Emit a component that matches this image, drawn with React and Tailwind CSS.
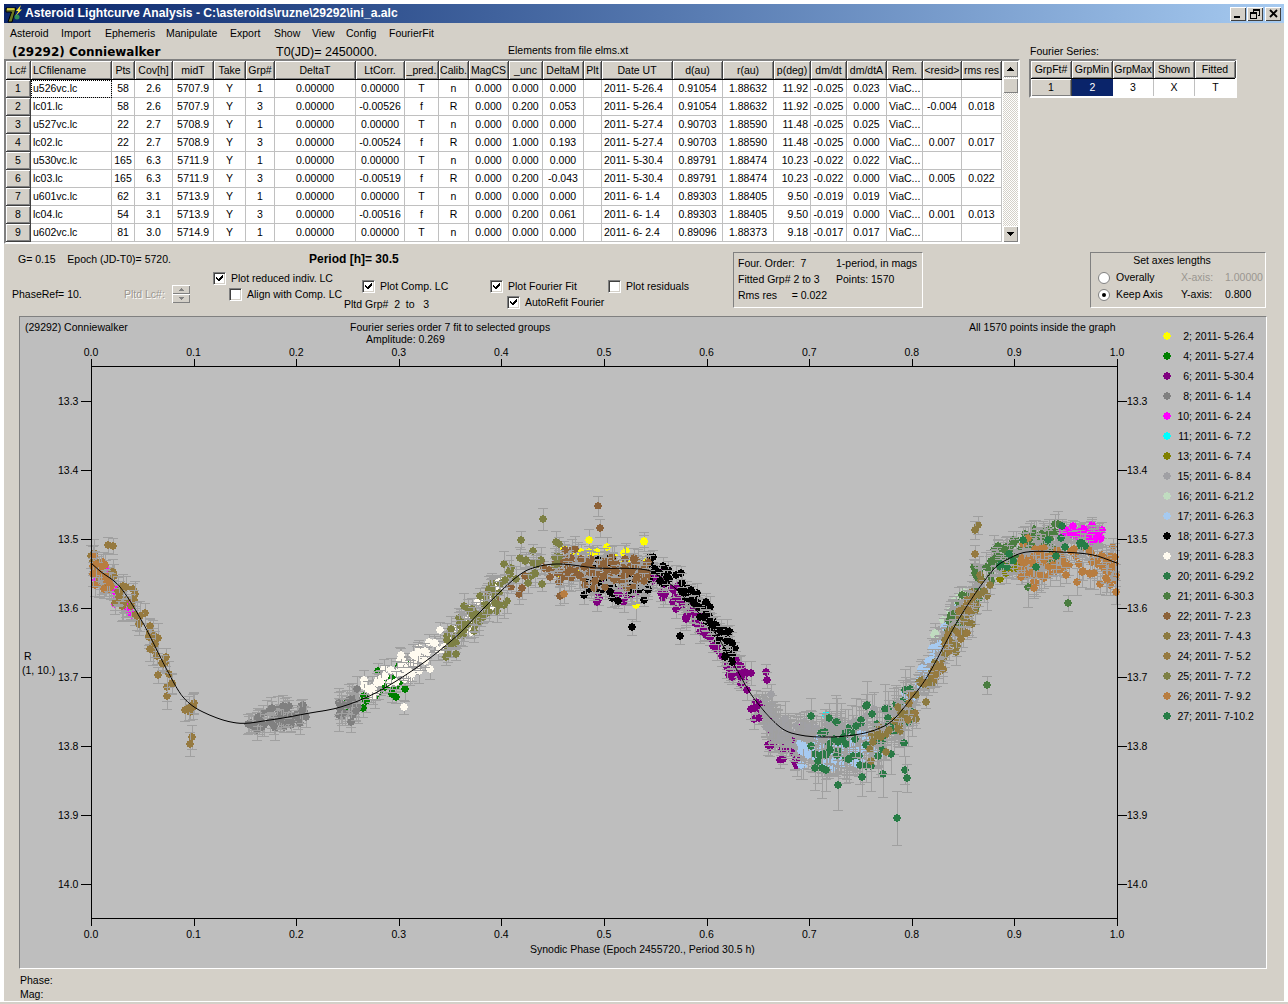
import React from "react";

const COLS = "grid grid-cols-[25px_81px_23px_38px_41px_32px_29px_81px_49px_34px_30px_40px_34px_41px_18px_71px_50px_51px_37px_36px_40px_36px_39px_40px]";
const HEAD = ["Lc#","LCfilename","Pts","Cov[h]","midT","Take","Grp#","DeltaT","LtCorr.","_pred.","Calib.","MagCS","_unc","DeltaM","Plt","Date UT","d(au)","r(au)","p(deg)","dm/dt","dm/dtA","Rem.","<resid>","rms res"];
const ROWS = [
  ["1","u526vc.lc","58","2.6","5707.9","Y","1","0.00000","0.00000","T","n","0.000","0.000","0.000","","2011- 5-26.4","0.91054","1.88632","11.92","-0.025","0.023","ViaC...","",""],
  ["2","lc01.lc","58","2.6","5707.9","Y","3","0.00000","-0.00526","f","R","0.000","0.200","0.053","","2011- 5-26.4","0.91054","1.88632","11.92","-0.025","0.000","ViaC...","-0.004","0.018"],
  ["3","u527vc.lc","22","2.7","5708.9","Y","1","0.00000","0.00000","T","n","0.000","0.000","0.000","","2011- 5-27.4","0.90703","1.88590","11.48","-0.025","0.025","ViaC...","",""],
  ["4","lc02.lc","22","2.7","5708.9","Y","3","0.00000","-0.00524","f","R","0.000","1.000","0.193","","2011- 5-27.4","0.90703","1.88590","11.48","-0.025","0.000","ViaC...","0.007","0.017"],
  ["5","u530vc.lc","165","6.3","5711.9","Y","1","0.00000","0.00000","T","n","0.000","0.000","0.000","","2011- 5-30.4","0.89791","1.88474","10.23","-0.022","0.022","ViaC...","",""],
  ["6","lc03.lc","165","6.3","5711.9","Y","3","0.00000","-0.00519","f","R","0.000","0.200","-0.043","","2011- 5-30.4","0.89791","1.88474","10.23","-0.022","0.000","ViaC...","0.005","0.022"],
  ["7","u601vc.lc","62","3.1","5713.9","Y","1","0.00000","0.00000","T","n","0.000","0.000","0.000","","2011- 6- 1.4","0.89303","1.88405","9.50","-0.019","0.019","ViaC...","",""],
  ["8","lc04.lc","54","3.1","5713.9","Y","3","0.00000","-0.00516","f","R","0.000","0.200","0.061","","2011- 6- 1.4","0.89303","1.88405","9.50","-0.019","0.000","ViaC...","0.001","0.013"],
  ["9","u602vc.lc","81","3.0","5714.9","Y","1","0.00000","0.00000","T","n","0.000","0.000","0.000","","2011- 6- 2.4","0.89096","1.88373","9.18","-0.017","0.017","ViaC...","",""],
];
const raised = "bg-[#d4d0c8] shadow-[inset_1px_1px_0_#ffffff,inset_-1px_-1px_0_#808080]";
const LEGEND = [
  ["2","2011- 5-26.4","#ffff00"],["4","2011- 5-27.4","#008000"],["6","2011- 5-30.4","#800080"],["8","2011- 6- 1.4","#808080"],
  ["10","2011- 6- 2.4","#ff00ff"],["11","2011- 6- 7.2","#00ffff"],["13","2011- 6- 7.4","#808000"],["15","2011- 6- 8.4","#a0a0a4"],
  ["16","2011- 6-21.2","#c0dcc0"],["17","2011- 6-26.3","#a6caf0"],["18","2011- 6-27.3","#000000"],["19","2011- 6-28.3","#fffbf0"],
  ["20","2011- 6-29.2","#2a7a46"],["21","2011- 6-30.3","#4a7d40"],["22","2011- 7- 2.3","#8c6239"],["23","2011- 7- 4.3","#8c7a40"],
  ["24","2011- 7- 5.2","#967a40"],["25","2011- 7- 7.2","#7d8044"],["26","2011- 7- 9.2","#b87d40"],["27","2011- 7-10.2","#267d46"],
];
const COLOR = Object.fromEntries(LEGEND.map((l) => [l[0], l[2]]));

const KNOTS = [[91,563],[100,571],[120,587],[143,623],[167,670],[183,697],[203,712],[237,723],[270,720],[310,713],[337,708],[365,698],[393,683],[430,658],[460,633],[480,612],[513,580],[530,569],[557,564],[597,568],[647,570],[665,580],[680,593],[713,630],[733,663],[753,697],[780,727],[800,735],[830,737],[860,734],[880,728],[893,720],[910,700],[927,677],[960,617],[993,570],[1010,558],[1027,552],[1060,552],[1093,555],[1117,563]];
function curve(x) {
  let i = 0;
  while (i < KNOTS.length - 2 && KNOTS[i + 1][0] < x) i++;
  const p1 = KNOTS[i], p2 = KNOTS[i + 1];
  const p0 = KNOTS[Math.max(i - 1, 0)], p3 = KNOTS[Math.min(i + 2, KNOTS.length - 1)];
  const t = Math.min(1, Math.max(0, (x - p1[0]) / (p2[0] - p1[0])));
  const m1 = ((p2[1] - p0[1]) / (p2[0] - p0[0])) * (p2[0] - p1[0]);
  const m2 = ((p3[1] - p1[1]) / (p3[0] - p1[0])) * (p2[0] - p1[0]);
  return (2*t*t*t - 3*t*t + 1)*p1[1] + (t*t*t - 2*t*t + t)*m1 + (-2*t*t*t + 3*t*t)*p2[1] + (t*t*t - t*t)*m2;
}
const CURVE_PTS = Array.from({ length: 1027 }, (_, i) => `${91 + i},${curve(91 + i).toFixed(1)}`).join(" ");

function makePoints() {
  let s = 29292;
  const r = () => { s = (s + 0x6d2b79f5) | 0; let t = Math.imul(s ^ (s >>> 15), 1 | s); t = (t + Math.imul(t ^ (t >>> 7), 61 | t)) ^ t; return ((t ^ (t >>> 14)) >>> 0) / 4294967296; };
  const g = () => (r() + r() + r() - 1.5) / 0.75;
  const spec = [
    ["2",558,650,32,-8,16,8],["4",336,408,24,0,14,9],
    ["6",590,650,36,18,14,8],["6",650,735,72,8,11,8],["6",735,770,32,0,13,9],["6",768,800,30,14,17,8],
    ["8",248,306,60,0,9,9],["8",338,358,28,0,11,12],["10",92,132,30,10,10,8],["10",1062,1102,55,-20,6,8],
    ["13",1000,1042,36,8,6,8],["15",762,835,110,2,10,14],["15",835,915,50,3,14,18],
    ["16",925,965,8,-24,8,8],["17",800,880,110,16,12,11],["17",905,960,45,-8,8,10],
    ["18",585,650,55,8,14,8],["18",650,735,80,-8,10,8],
    ["19",362,500,85,-6,10,9],["20",810,915,70,10,24,18],["21",945,1060,120,-8,14,11],
    ["22",555,650,115,2,11,10],["22",480,560,12,2,14,8],
    ["23",870,990,80,8,14,10],["24",91,196,62,0,14,11],["24",905,975,25,8,12,9],
    ["25",445,560,85,-2,14,10],["26",91,112,22,4,12,10],["26",1020,1117,105,10,14,12],["27",1000,1095,16,-8,16,10],
  ];
  const out = [];
  spec.forEach(([id, x0, x1, n, off, sp, e]) => {
    for (let i = 0; i < n; i++) {
      const x = x0 + r() * (x1 - x0);
      out.push({ id, x, y: curve(x) + off + g() * sp, e: e * (0.6 + r() * 0.8) });
    }
  });
  const extra = [["22",598,506,10],["22",600,528,9],["25",543,519,11],["25",521,540,9],["18",632,627,8],["2",636,605,16],["18",680,636,8],
    ["18",584,595,9],["26",564,594,9],["22",560,596,9],["27",897,818,27],["20",905,770,14],["20",907,778,14],["20",838,785,25],["20",822,768,30],
    ["21",987,685,9],["21",1068,603,8],["11",826,715,6],["11",852,760,7],["11",848,758,6],["19",404,707,7],["6",766,672,8],["6",767,680,8],
    ["6",798,761,8],["6",780,760,8],["24",192,737,12],["24",190,744,12],["23",978,525,9],["23",975,530,9],["24",975,554,9],["24",108,545,8],["24",113,546,8],["26",1116,592,12],
    ["15",771,694,10],["21",1028,587,20],["26",1034,588,10]];
  extra.forEach(([id, x, y, e]) => out.push({ id, x, y, e }));
  const order = LEGEND.map((l) => l[0]);
  return out.sort((a, b) => order.indexOf(a.id) - order.indexOf(b.id));
}
const POINTS = makePoints();

function Check({ on }) {
  return (
    <span className="w-[13px] h-[13px] shrink-0 bg-white border-t border-l border-t-[#808080] border-l-[#808080] border-b border-r border-b-white border-r-white shadow-[inset_1px_1px_0_#404040,inset_-1px_-1px_0_#d4d0c8] flex items-center justify-center">
      {on && (
        <svg width="9" height="9" viewBox="0 0 9 9" shapeRendering="crispEdges">
          <path d="M1 3h1v1h1v1h1V4h1V3h1V2h1V1h1v3H7v1H6v1H5v1H3V6H2V5H1z" fill="#000" />
        </svg>
      )}
    </span>
  );
}
function CheckLabel({ on, children, className = "" }) {
  return <div className={`flex items-center gap-[5px] h-[14px] whitespace-nowrap ${className}`}><Check on={on} /><span>{children}</span></div>;
}
function Radio({ on }) {
  return (
    <svg width="12" height="12" viewBox="0 0 12 12" className="shrink-0">
      <circle cx="6" cy="6" r="5.5" fill="#fff" stroke="#808080" />
      {on && <circle cx="6" cy="6" r="2" fill="#000" />}
    </svg>
  );
}
function TitleBtn({ children }) {
  return <div className={`w-4 h-[14px] flex items-center justify-center shadow-[inset_1px_1px_0_#ffffff,inset_-1px_-1px_0_#404040] bg-[#d4d0c8]`}>{children}</div>;
}

function Chart() {
  const xt = Array.from({ length: 11 }, (_, i) => i);
  const yt = [[401,"13.3"],[470,"13.4"],[539,"13.5"],[608,"13.6"],[677,"13.7"],[746,"13.8"],[815,"13.9"],[884,"14.0"]];
  const px = (i) => 91 + i * 102.6;
  return (
    <svg width="1140" height="651" viewBox="20 317 1140 651" className="shrink-0 block" fontSize="10.5" fill="#000">
      <text x="25" y="331">(29292) Conniewalker</text>
      <text x="350" y="331">Fourier series order 7 fit to selected groups</text>
      <text x="366" y="343">Amplitude: 0.269</text>
      <text x="969" y="331">All 1570 points inside the graph</text>
      <text x="24" y="660">R</text>
      <text x="22" y="674">(1, 10.)</text>
      <text x="530" y="953">Synodic Phase (Epoch 2455720., Period 30.5 h)</text>
      <g shapeRendering="crispEdges">
        {POINTS.map((p, i) => (
          <g key={i}>
            <path d={`M${p.x.toFixed(0)} ${(p.y - p.e).toFixed(0)}V${(p.y + p.e).toFixed(0)}M${(p.x - 5).toFixed(0)} ${(p.y - p.e).toFixed(0)}h10M${(p.x - 5).toFixed(0)} ${(p.y + p.e).toFixed(0)}h10`} stroke="#a0a0a0" fill="none" />
            <circle cx={p.x.toFixed(0)} cy={p.y.toFixed(0)} r="3.6" fill={COLOR[p.id]} />
          </g>
        ))}
      </g>
      <polyline points={CURVE_PTS} fill="none" stroke="#000" strokeWidth="1" />
      <g shapeRendering="crispEdges" stroke="#000" fill="none">
        <rect x="91.5" y="366.5" width="1026" height="552" />
        {xt.map((i) => <path key={i} d={`M${Math.round(px(i)) + 0.5} 359V366M${Math.round(px(i)) + 0.5} 919V926`} />)}
        {yt.map(([y]) => <path key={y} d={`M81 ${y + 0.5}H91M1118 ${y + 0.5}H1127`} />)}
      </g>
      {xt.map((i) => (
        <g key={i} textAnchor="middle">
          <text x={px(i)} y="356">{(i / 10).toFixed(1)}</text>
          <text x={px(i)} y="938">{(i / 10).toFixed(1)}</text>
        </g>
      ))}
      {yt.map(([y, t]) => (
        <g key={t}>
          <text x="58" y={y + 4}>{t}</text>
          <text x="1127" y={y + 4}>{t}</text>
        </g>
      ))}
    </svg>
  );
}

const MENU = [["Asteroid","w-[51px]"],["Import","w-[44px]"],["Ephemeris","w-[61px]"],["Manipulate","w-[64px]"],["Export","w-[44px]"],["Show","w-[38px]"],["View","w-[34px]"],["Config","w-[43px]"],["FourierFit","w-[60px]"]];

export default function App() {
  return (
    <div className="w-[1288px] h-[1004px] bg-white overflow-hidden pt-1 px-1 font-['Liberation_Sans',Arial,sans-serif] text-[10.5px] leading-[13px] text-black">
      <div className="w-[1280px] h-[997px] bg-[#d4d0c8] flex flex-col">
        <div className="h-[19px] shrink-0 flex items-center bg-gradient-to-r from-[#0a246a] to-[#a6caf0] pl-[1px] pr-[3px]">
          <svg width="18" height="18" viewBox="0 0 18 18" className="shrink-0">
            <path d="M1 3H11L7 17H3L6.5 7H1z" fill="#6e7a22" stroke="#000000" strokeWidth="1" />
            <path d="M2 4H9.5" stroke="#f2e64a" strokeWidth="1.5" />
            <circle cx="12" cy="12" r="2.5" fill="#2f8f5a" />
            <path d="M16 0L11 6H13.5L10.5 11L17 4.5H14.5z" fill="#ffe83a" />
          </svg>
          <span className="ml-[2px] text-white font-bold text-[12.15px] whitespace-nowrap">Asteroid Lightcurve Analysis - C:\asteroids\ruzne\29292\ini_a.alc</span>
          <div className="ml-auto flex items-center gap-0">
            <TitleBtn><span className="w-[6px] h-[2px] bg-black mt-[7px] mr-[3px]" /></TitleBtn>
            <span className="w-[1px]" />
            <TitleBtn>
              <svg width="10" height="10" viewBox="0 0 10 10" shapeRendering="crispEdges" fill="none" stroke="#000">
                <path d="M3.5 2.5V.5H9.5V6.5H7.5M3.5 1.5H9.5M.5 3.5H6.5V9.5H.5ZM.5 4.5H6.5" />
              </svg>
            </TitleBtn>
            <span className="w-[2px]" />
            <TitleBtn>
              <svg width="9" height="9" viewBox="0 0 9 9"><path d="M1 1L8 8M8 1L1 8" stroke="#000" strokeWidth="1.8" /></svg>
            </TitleBtn>
          </div>
        </div>

        <div className="h-5 shrink-0 flex items-center whitespace-nowrap pl-[6px]">
          {MENU.map(([m, w]) => <span key={m} className={w}>{m}</span>)}
        </div>

        <div className="flex shrink-0">
          <div className="w-[1016px] shrink-0">
            <div className="h-4 flex items-center whitespace-nowrap">
              <span className="ml-2 w-[264px] font-['DejaVu_Sans',sans-serif] font-bold text-[12px] mt-[2px]">(29292) Conniewalker</span>
              <span className="w-[232px] text-[12.5px] mt-[2px]">T0(JD)= 2450000.</span>
              <span className="-mt-[2px]">Elements from file elms.xt</span>
            </div>
            <div className="h-[185px] border-2 border-t-[#808080] border-l-[#808080] border-r-white border-b-white bg-white flex">
              <div className="w-[996px]">
                <div className={`${COLS} h-[19px] border-b border-black`}>
                  {HEAD.map((h, i) => (
                    <div key={h} className={`${raised} flex items-center ${i === 1 ? "justify-start pl-[2px]" : "justify-center"} pt-[1px] border-r border-[#404040] overflow-hidden whitespace-nowrap`}>{h}</div>
                  ))}
                </div>
                {ROWS.map((row, ri) => (
                  <div key={ri} className={`${COLS} h-[18px]`}>
                    {row.map((c, ci) => {
                      if (ci === 0) return <div key={ci} className={`${raised} flex items-center justify-center border-r border-b border-[#404040]`}>{c}</div>;
                      const left = ci === 1 || ci === 15 || ci === 21;
                      const right = ci === 18;
                      const focus = ri === 0 && ci === 1;
                      return (
                        <div key={ci} className={`flex items-center border-r border-b border-[#c0c0c0] overflow-hidden whitespace-nowrap ${left ? "justify-start pl-[2px]" : right ? "justify-end pr-[2px]" : "justify-center"} ${focus ? "outline-1 outline-dotted -outline-offset-1 outline-black" : ""}`}>{c}</div>
                      );
                    })}
                  </div>
                ))}
              </div>
              <div className="w-[17px] ml-[1px] flex flex-col bg-[repeating-conic-gradient(#ffffff_0_25%,#d4d0c8_0_50%)] bg-size-[2px_2px]">
                <div className={`${raised} h-4 shrink-0 flex items-center justify-center`}>
                  <svg width="7" height="4" viewBox="0 0 7 4" shapeRendering="crispEdges"><path d="M3 0h1v1h1v1h1v1h1v1H0V3h1V2h1V1h1z" /></svg>
                </div>
                <div className={`${raised} h-[15px] mt-[1px] shrink-0`} />
                <div className={`${raised} h-4 shrink-0 mt-auto flex items-center justify-center`}>
                  <svg width="7" height="4" viewBox="0 0 7 4" shapeRendering="crispEdges"><path d="M0 0h7v1H6v1H5v1H4v1H3V3H2V2H1V1H0z" /></svg>
                </div>
              </div>
            </div>
          </div>
          <div className="ml-[9px] w-[208px]">
            <div className="h-4 flex items-center pl-[1px]">Fourier Series:</div>
            <div className="h-[39px] border-2 border-t-[#808080] border-l-[#808080] border-r-white border-b-white bg-white">
              <div className="grid grid-cols-[41px_41px_41px_41px_41px] h-[18px] border-b border-black">
                {["GrpFt#","GrpMin","GrpMax","Shown","Fitted"].map((h) => (
                  <div key={h} className={`${raised} flex items-center justify-center border-r border-[#404040] whitespace-nowrap overflow-hidden`}>{h}</div>
                ))}
              </div>
              <div className="grid grid-cols-[41px_41px_41px_41px_41px] h-[17px]">
                <div className={`${raised} flex items-center justify-center border-r border-[#404040]`}>1</div>
                <div className="bg-[#0a246a] text-white flex items-center justify-center">2</div>
                <div className="flex items-center justify-center border-r border-[#c0c0c0]">3</div>
                <div className="flex items-center justify-center border-r border-[#c0c0c0]">X</div>
                <div className="flex items-center justify-center">T</div>
              </div>
            </div>
          </div>
        </div>

        <div className="h-[72px] shrink-0 flex">
          <div className="w-[729px] shrink-0">
            <div className="h-[22px] pt-2 flex items-center whitespace-nowrap">
              <span className="ml-[14px] w-[291px]">G= 0.15 &nbsp;&nbsp;&nbsp;Epoch (JD-T0)= 5720.</span>
              <span className="font-bold text-[12px]">Period [h]= 30.5</span>
            </div>
            <div className="flex h-[50px]">
              <div className="w-[209px] shrink-0 pl-2 pt-[19px] flex items-center self-start whitespace-nowrap">
                <span className="w-[112px]">PhaseRef= 10.</span>
                <span className="text-[#9a9690] [text-shadow:1px_1px_0_#ffffff] w-[48px]">Pltd Lc#:</span>
                <div className="flex flex-col w-[18px] h-[18px]">
                  <div className={`${raised} h-[9px] flex items-center justify-center`}>
                    <svg width="5" height="3" viewBox="0 0 5 3" shapeRendering="crispEdges"><path d="M2 0h1v1h1v1h1v1H0V2h1V1h1z" fill="#808080" /></svg>
                  </div>
                  <div className={`${raised} h-[9px] flex items-center justify-center`}>
                    <svg width="5" height="3" viewBox="0 0 5 3" shapeRendering="crispEdges"><path d="M0 0h5v1H4v1H3v1H2V2H1V1H0z" fill="#808080" /></svg>
                  </div>
                </div>
              </div>
              <div className="w-[149px] shrink-0 pt-[5px] flex flex-col gap-[2px]">
                <CheckLabel on>Plot reduced indiv. LC</CheckLabel>
                <CheckLabel className="ml-4">Align with Comp. LC</CheckLabel>
              </div>
              <div className="w-[128px] shrink-0 pt-[13px]">
                <CheckLabel on>Plot Comp. LC</CheckLabel>
                <div className="mt-[5px] -ml-[18px] whitespace-nowrap">Pltd Grp# &nbsp;2 &nbsp;to &nbsp;&nbsp;3</div>
              </div>
              <div className="w-[118px] shrink-0 pt-[13px] flex flex-col gap-[2px]">
                <CheckLabel on>Plot Fourier Fit</CheckLabel>
                <CheckLabel on className="ml-[17px]">AutoRefit Fourier</CheckLabel>
              </div>
              <div className="pt-[13px]">
                <CheckLabel>Plot residuals</CheckLabel>
              </div>
            </div>
          </div>
          <div className="w-[190px] h-[56px] mt-[8px] shrink-0 border border-t-[#808080] border-l-[#808080] border-r-white border-b-white pl-1 pt-[2px] leading-[16px] grid grid-cols-[98px_1fr] auto-rows-[16px] whitespace-nowrap">
            <span>Four. Order: &nbsp;7</span><span>1-period, in mags</span>
            <span>Fitted Grp# 2 to 3</span><span>Points: 1570</span>
            <span>Rms res &nbsp;&nbsp;&nbsp;&nbsp;= 0.022</span><span />
          </div>
          <div className="w-[176px] h-[56px] mt-[8px] ml-[167px] shrink-0 border border-t-[#808080] border-l-[#808080] border-r-white border-b-white whitespace-nowrap">
            <div className="text-center pr-[12px] h-[16px] leading-[15px]">Set axes lengths</div>
            <div className="grid grid-cols-[83px_44px_1fr] items-center pl-[7px] h-[17px]">
              <span className="flex items-center gap-[6px]"><Radio />Overally</span>
              <span className="text-[#9a9690]">X-axis:</span>
              <span className="text-[#9a9690]">1.00000</span>
            </div>
            <div className="grid grid-cols-[83px_44px_1fr] items-center pl-[7px] h-[17px]">
              <span className="flex items-center gap-[6px]"><Radio on />Keep Axis</span>
              <span>Y-axis:</span>
              <span>0.800</span>
            </div>
          </div>
        </div>

        <div className="ml-[15px] w-[1248px] h-[653px] shrink-0 bg-[#bebebe] border border-t-[#808080] border-l-[#808080] border-r-white border-b-white flex">
          <Chart />
          <div className="pt-[9px] flex flex-col">
            {LEGEND.map(([n, d, c]) => (
              <div key={n} className="h-5 flex items-center whitespace-nowrap">
                <svg width="8" height="8" viewBox="0 0 8 8" className="ml-[3px] shrink-0" shapeRendering="crispEdges"><circle cx="4" cy="4" r="3.6" fill={c} /></svg>
                <span className="w-[21px] text-right shrink-0">{n};</span>
                <span className="ml-[3px]">{d}</span>
              </div>
            ))}
          </div>
        </div>

        <div className="h-[32px] pl-4 pt-[4px] leading-[14px] shrink-0">
          <div>Phase:</div>
          <div>Mag:</div>
        </div>
      </div>
      <div className="h-[3px] -mx-1 mt-[1px] bg-[#d4d0c8]" />
    </div>
  );
}
